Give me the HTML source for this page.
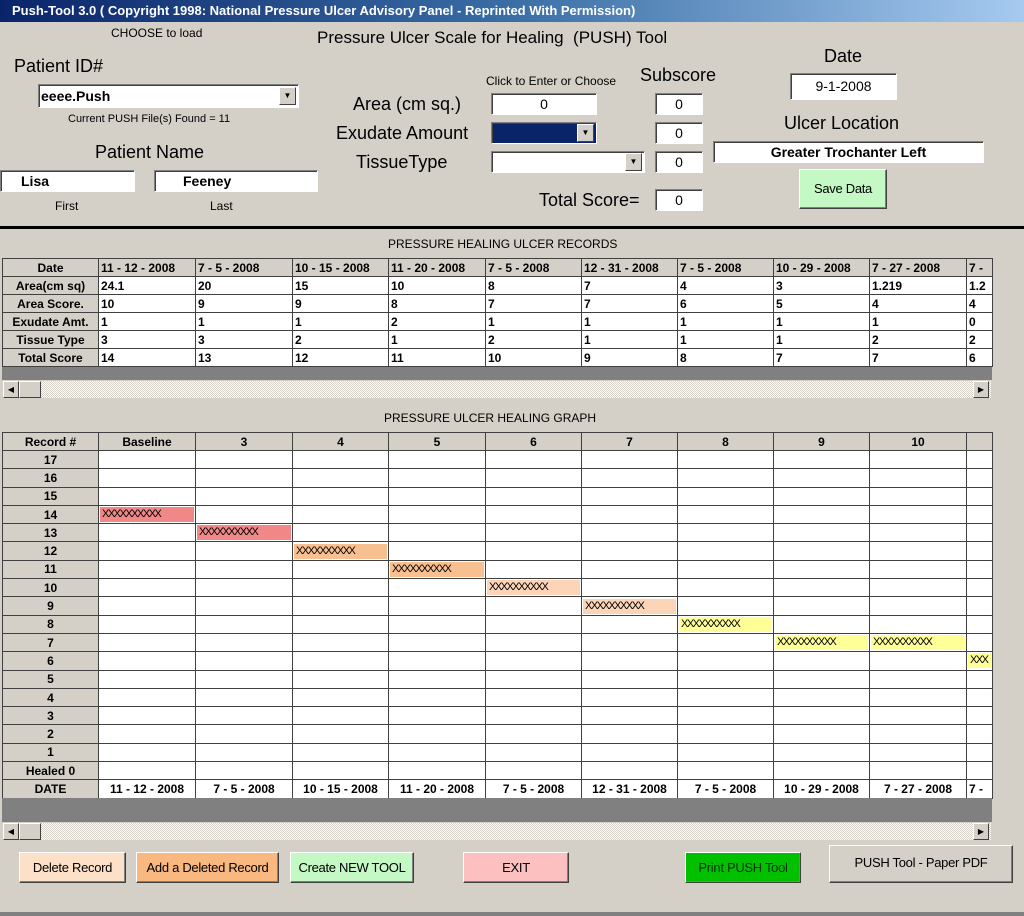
<!DOCTYPE html>
<html><head><meta charset="utf-8"><style>
*{box-sizing:border-box;margin:0;padding:0}
body{width:1024px;height:916px;background:#d4d0c8;font-family:"Liberation Sans",sans-serif;position:relative;overflow:hidden;color:#000}
.a{position:absolute;white-space:nowrap}
.title{left:0;top:0;width:1024px;height:22px;background:linear-gradient(90deg,#0a246a,#3a6ea5 50%,#a6caf0);color:#fff;font-weight:bold;font-size:13px;line-height:22px;padding-left:12px}
.box{position:absolute;background:#fff;border-top:1px solid #808080;border-left:1px solid #808080;border-right:1px solid #fff;border-bottom:1px solid #fff;box-shadow:inset 1px 1px 0 #404040}
.lbl{font-size:18px}
.dd{position:absolute;width:17px;border:1px solid;border-color:#fff #404040 #404040 #fff;background:#d4d0c8;font-size:8px;text-align:center}
.btn{position:absolute;border:1px solid;border-color:#fff #404040 #404040 #fff;box-shadow:inset -1px -1px 0 #808080;font-size:13px;text-align:center;letter-spacing:-0.3px}
table{position:absolute;border-collapse:collapse;table-layout:fixed;font-size:12px;font-weight:bold}
td{border:1px solid #404040;overflow:hidden;white-space:nowrap;padding:0 2px;background:#fff}
td.h{background:#d4d0c8;text-align:center;border-color:#404040}
.g td{text-align:center}
.g td.b{padding:1px 1px}
.bar{display:block;height:100%;font-size:11px;font-weight:normal;letter-spacing:-1.5px;text-align:left;padding-left:2px;line-height:15px}
.r{background:#f08888}.o{background:#f8c090}.p{background:#fcd4b8}.y{background:#ffff98}
.sb{position:absolute;background:repeating-conic-gradient(#fff 0 25%,#d4d0c8 0 50%) 0 0/2px 2px;border:1px solid #d4d0c8}
.sbb{position:absolute;width:16px;height:17px;background:#d4d0c8;border:1px solid;border-color:#fff #404040 #404040 #fff;font-size:8px;text-align:center;line-height:15px}
</style></head><body>
<div class="a title">Push-Tool 3.0 ( Copyright 1998: National Pressure Ulcer Advisory Panel - Reprinted With Permission)</div>
<div class="a" style="left:111px;top:26px;font-size:12px">CHOOSE to load</div>
<div class="a" style="left:317px;top:28px;font-size:17px">Pressure Ulcer Scale for Healing&nbsp; (PUSH) Tool</div>
<div class="a lbl" style="left:14px;top:56px">Patient ID#</div>
<div class="box" style="left:38px;top:84px;width:261px;height:24px;font-size:14px;font-weight:bold;padding:3px 2px">eeee.Push</div>
<div class="dd" style="left:279px;top:87px;height:18px;line-height:16px">▼</div>
<div class="a" style="left:68px;top:113px;font-size:11px">Current PUSH File(s) Found = 11</div>
<div class="a lbl" style="left:95px;top:142px">Patient Name</div>
<div class="box" style="left:0;top:170px;width:135px;height:22px;font-size:14px;font-weight:bold;padding:2px 20px">Lisa</div>
<div class="box" style="left:154px;top:170px;width:164px;height:22px;font-size:14px;font-weight:bold;padding:2px 28px">Feeney</div>
<div class="a" style="left:55px;top:199px;font-size:12px">First</div>
<div class="a" style="left:210px;top:199px;font-size:12px">Last</div>
<div class="a" style="left:486px;top:74px;font-size:12px">Click to Enter or Choose</div>
<div class="a lbl" style="left:640px;top:65px">Subscore</div>
<div class="a lbl" style="left:353px;top:94px">Area (cm sq.)</div>
<div class="a lbl" style="left:336px;top:123px">Exudate Amount</div>
<div class="a lbl" style="left:356px;top:152px">TissueType</div>
<div class="box" style="left:491px;top:93px;width:106px;height:22px;text-align:center;font-size:14px;padding-top:2px">0</div>
<div class="box" style="left:491px;top:122px;width:106px;height:22px;background:#0a246a"></div>
<div class="dd" style="left:577px;top:124px;height:18px;line-height:16px">▼</div>
<div class="box" style="left:491px;top:151px;width:154px;height:22px"></div>
<div class="dd" style="left:625px;top:153px;height:18px;line-height:16px">▼</div>
<div class="box" style="left:655px;top:93px;width:48px;height:22px;text-align:center;font-size:14px;padding-top:2px">0</div>
<div class="box" style="left:655px;top:122px;width:48px;height:22px;text-align:center;font-size:14px;padding-top:2px">0</div>
<div class="box" style="left:655px;top:151px;width:48px;height:22px;text-align:center;font-size:14px;padding-top:2px">0</div>
<div class="a lbl" style="left:539px;top:190px">Total Score=</div>
<div class="box" style="left:655px;top:189px;width:48px;height:22px;text-align:center;font-size:14px;padding-top:2px">0</div>
<div class="a lbl" style="left:824px;top:46px">Date</div>
<div class="box" style="left:790px;top:73px;width:107px;height:27px;text-align:center;font-size:14px;padding-top:4px">9-1-2008</div>
<div class="a lbl" style="left:784px;top:113px">Ulcer Location</div>
<div class="box" style="left:713px;top:141px;width:271px;height:22px;text-align:center;font-size:14px;font-weight:bold;padding-top:2px">Greater Trochanter Left</div>
<div class="btn" style="left:799px;top:169px;width:88px;height:40px;background:#c4f8c4;line-height:37px">Save Data</div>
<div class="a" style="left:0;top:226px;width:1024px;height:3px;background:#000"></div>

<div class="a" style="left:388px;top:237px;font-size:12px">PRESSURE HEALING ULCER RECORDS</div>
<table style="left:2px;top:258px;width:990px">
<colgroup><col style="width:96px"><col style="width:97px"><col style="width:97px"><col style="width:96px"><col style="width:97px"><col style="width:96px"><col style="width:96px"><col style="width:96px"><col style="width:96px"><col style="width:97px"><col style="width:26px"></colgroup>
<tr style="height:18px"><td class="h">Date</td><td class="h" style="text-align:left">11 - 12 - 2008</td><td class="h" style="text-align:left">7 - 5 - 2008</td><td class="h" style="text-align:left">10 - 15 - 2008</td><td class="h" style="text-align:left">11 - 20 - 2008</td><td class="h" style="text-align:left">7 - 5 - 2008</td><td class="h" style="text-align:left">12 - 31 - 2008</td><td class="h" style="text-align:left">7 - 5 - 2008</td><td class="h" style="text-align:left">10 - 29 - 2008</td><td class="h" style="text-align:left">7 - 27 - 2008</td><td class="h" style="text-align:left">7 -</td></tr>
<tr style="height:18px"><td class="h">Area(cm sq)</td><td>24.1</td><td>20</td><td>15</td><td>10</td><td>8</td><td>7</td><td>4</td><td>3</td><td>1.219</td><td>1.2</td></tr>
<tr style="height:18px"><td class="h">Area Score.</td><td>10</td><td>9</td><td>9</td><td>8</td><td>7</td><td>7</td><td>6</td><td>5</td><td>4</td><td>4</td></tr>
<tr style="height:18px"><td class="h">Exudate Amt.</td><td>1</td><td>1</td><td>1</td><td>2</td><td>1</td><td>1</td><td>1</td><td>1</td><td>1</td><td>0</td></tr>
<tr style="height:18px"><td class="h">Tissue Type</td><td>3</td><td>3</td><td>2</td><td>1</td><td>2</td><td>1</td><td>1</td><td>1</td><td>2</td><td>2</td></tr>
<tr style="height:18px"><td class="h">Total Score</td><td>14</td><td>13</td><td>12</td><td>11</td><td>10</td><td>9</td><td>8</td><td>7</td><td>7</td><td>6</td></tr>
</table>
<div class="a" style="left:2px;top:367px;width:990px;height:13px;background:#808080"></div>
<div class="sb" style="left:2px;top:380px;width:990px;height:19px"></div>
<div class="sbb" style="left:3px;top:381px">◀</div>
<div class="sbb" style="left:19px;top:381px;width:22px"></div>
<div class="sbb" style="left:973px;top:381px">▶</div>

<div class="a" style="left:384px;top:411px;font-size:12px">PRESSURE ULCER HEALING GRAPH</div>
<table class="g" style="left:2px;top:432px;width:990px">
<colgroup><col style="width:96px"><col style="width:97px"><col style="width:97px"><col style="width:96px"><col style="width:97px"><col style="width:96px"><col style="width:96px"><col style="width:96px"><col style="width:96px"><col style="width:97px"><col style="width:26px"></colgroup>
<tr style="height:18px"><td class="h">Record #</td><td class="h">Baseline</td><td class="h">3</td><td class="h">4</td><td class="h">5</td><td class="h">6</td><td class="h">7</td><td class="h">8</td><td class="h">9</td><td class="h">10</td><td class="h"></td></tr>
<tr style="height:18.3px"><td class="h">17</td><td></td><td></td><td></td><td></td><td></td><td></td><td></td><td></td><td></td><td></td></tr>
<tr style="height:18.3px"><td class="h">16</td><td></td><td></td><td></td><td></td><td></td><td></td><td></td><td></td><td></td><td></td></tr>
<tr style="height:18.3px"><td class="h">15</td><td></td><td></td><td></td><td></td><td></td><td></td><td></td><td></td><td></td><td></td></tr>
<tr style="height:18.3px"><td class="h">14</td><td class="b"><span class="bar r">XXXXXXXXXX</span></td><td></td><td></td><td></td><td></td><td></td><td></td><td></td><td></td><td></td></tr>
<tr style="height:18.3px"><td class="h">13</td><td></td><td class="b"><span class="bar r">XXXXXXXXXX</span></td><td></td><td></td><td></td><td></td><td></td><td></td><td></td><td></td></tr>
<tr style="height:18.3px"><td class="h">12</td><td></td><td></td><td class="b"><span class="bar o">XXXXXXXXXX</span></td><td></td><td></td><td></td><td></td><td></td><td></td><td></td></tr>
<tr style="height:18.3px"><td class="h">11</td><td></td><td></td><td></td><td class="b"><span class="bar o">XXXXXXXXXX</span></td><td></td><td></td><td></td><td></td><td></td><td></td></tr>
<tr style="height:18.3px"><td class="h">10</td><td></td><td></td><td></td><td></td><td class="b"><span class="bar p">XXXXXXXXXX</span></td><td></td><td></td><td></td><td></td><td></td></tr>
<tr style="height:18.3px"><td class="h">9</td><td></td><td></td><td></td><td></td><td></td><td class="b"><span class="bar p">XXXXXXXXXX</span></td><td></td><td></td><td></td><td></td></tr>
<tr style="height:18.3px"><td class="h">8</td><td></td><td></td><td></td><td></td><td></td><td></td><td class="b"><span class="bar y">XXXXXXXXXX</span></td><td></td><td></td><td></td></tr>
<tr style="height:18.3px"><td class="h">7</td><td></td><td></td><td></td><td></td><td></td><td></td><td></td><td class="b"><span class="bar y">XXXXXXXXXX</span></td><td class="b"><span class="bar y">XXXXXXXXXX</span></td><td></td></tr>
<tr style="height:18.3px"><td class="h">6</td><td></td><td></td><td></td><td></td><td></td><td></td><td></td><td></td><td></td><td class="b"><span class="bar y">XXX</span></td></tr>
<tr style="height:18.3px"><td class="h">5</td><td></td><td></td><td></td><td></td><td></td><td></td><td></td><td></td><td></td><td></td></tr>
<tr style="height:18.3px"><td class="h">4</td><td></td><td></td><td></td><td></td><td></td><td></td><td></td><td></td><td></td><td></td></tr>
<tr style="height:18.3px"><td class="h">3</td><td></td><td></td><td></td><td></td><td></td><td></td><td></td><td></td><td></td><td></td></tr>
<tr style="height:18.3px"><td class="h">2</td><td></td><td></td><td></td><td></td><td></td><td></td><td></td><td></td><td></td><td></td></tr>
<tr style="height:18.3px"><td class="h">1</td><td></td><td></td><td></td><td></td><td></td><td></td><td></td><td></td><td></td><td></td></tr>
<tr style="height:18.3px"><td class="h">Healed 0</td><td></td><td></td><td></td><td></td><td></td><td></td><td></td><td></td><td></td><td></td></tr>
<tr style="height:18.3px"><td class="h">DATE</td><td>11 - 12 - 2008</td><td>7 - 5 - 2008</td><td>10 - 15 - 2008</td><td>11 - 20 - 2008</td><td>7 - 5 - 2008</td><td>12 - 31 - 2008</td><td>7 - 5 - 2008</td><td>10 - 29 - 2008</td><td>7 - 27 - 2008</td><td style="text-align:left">7 -</td></tr>
</table>
<div class="a" style="left:2px;top:798px;width:990px;height:24px;background:#808080"></div>
<div class="sb" style="left:2px;top:822px;width:990px;height:19px"></div>
<div class="sbb" style="left:3px;top:823px">◀</div>
<div class="sbb" style="left:19px;top:823px;width:22px"></div>
<div class="sbb" style="left:973px;top:823px">▶</div>

<div class="btn" style="left:19px;top:852px;width:107px;height:31px;background:#fce0c8;line-height:29px">Delete Record</div>
<div class="btn" style="left:136px;top:852px;width:143px;height:31px;background:#f8b880;line-height:29px">Add a Deleted Record</div>
<div class="btn" style="left:290px;top:852px;width:124px;height:31px;background:#c4f8c4;line-height:29px">Create NEW TOOL</div>
<div class="btn" style="left:463px;top:852px;width:106px;height:31px;background:#fcc0c0;line-height:29px">EXIT</div>
<div class="btn" style="left:685px;top:852px;width:116px;height:31px;background:#00c000;line-height:29px;color:#003000">Print PUSH Tool</div>
<div class="btn" style="left:829px;top:845px;width:184px;height:38px;background:#d4d0c8;line-height:34px">PUSH Tool - Paper PDF</div>
<div class="a" style="left:0;top:912px;width:1024px;height:4px;background:#808080"></div>
</body></html>
